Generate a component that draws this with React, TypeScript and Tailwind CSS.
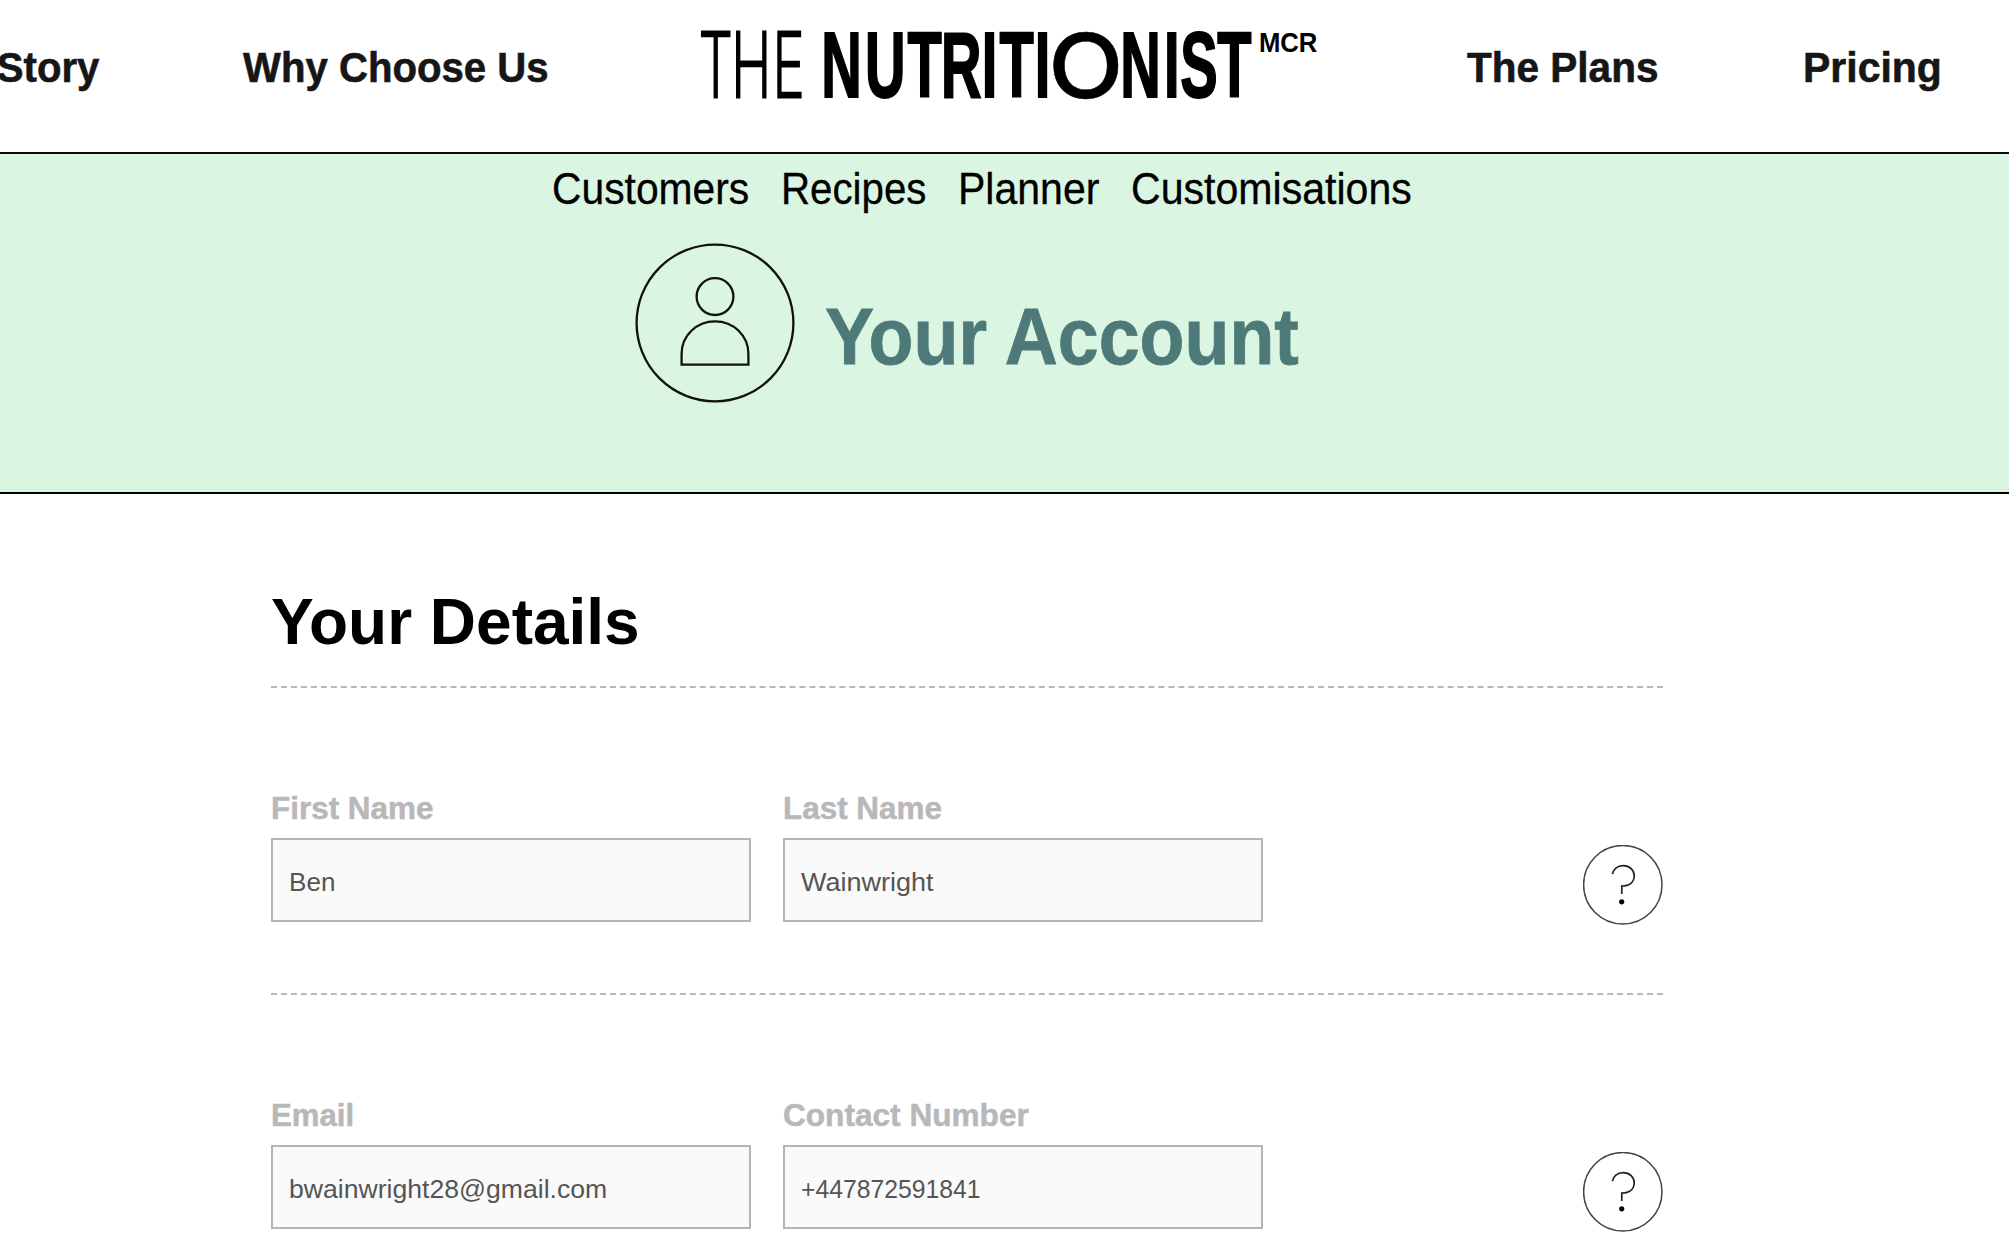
function Logo() {
  return (
    <svg
      className="block h-[152px] w-[620px] shrink-0"
      viewBox="700 0 620 152"
      fill="#000"
      stroke="#000"
      strokeLinejoin="miter"
      role="img"
      aria-label="The Nutritionist MCR"
    >
      <g transform="scale(0.61 1)">
        <text x="1145.4 1198.6 1266.6" y="97" className="font-['Inter'] text-[89px] font-extralight" strokeWidth="3">
          THE
        </text>
      </g>
      <g transform="scale(0.6 1)" className="font-['Liberation_Sans'] text-[93.5px] font-bold" strokeWidth="2">
        <text x="1368.6 1441.6 1512.4 1568.5 1636.4 1665.9 1724.6" y="97">
          NUTRITI
        </text>
        <text x="1867.2 1939.8 1967 2028.8" y="97">
          NIST
        </text>
      </g>
      <g transform="scale(1.09 1)">
        <text x="996.2" y="97.7" textAnchor="middle" strokeWidth="0.5" className="font-['Inter'] text-[90px] font-medium">
          O
        </text>
      </g>
      <g transform="scale(0.906 1)">
        <text x="1389.5" y="52" stroke="none" className="font-['Liberation_Sans'] text-[28.4px] font-bold">
          MCR
        </text>
      </g>
    </svg>
  );
}

function AccountIcon() {
  return (
    <svg className="block size-[160px] shrink-0" viewBox="0 0 160 160" fill="none" stroke="#111" strokeWidth="2.3">
      <circle cx="80" cy="80" r="78.4" />
      <circle cx="80" cy="53.6" r="18.4" />
      <path d="M46.6 121.6V111C46.6 92.5 61.5 78.4 80 78.4S113.4 92.5 113.4 111V121.6Z" />
    </svg>
  );
}

function HelpIcon() {
  return (
    <svg className="block size-20" viewBox="0 0 80 80" fill="none" stroke="#444" strokeWidth="1.5">
      <circle cx="39.8" cy="39.7" r="39.2" />
      <path d="M29.4 29.2C30 24.2 34.4 20.7 40.1 20.7C46.7 20.7 51.2 24.9 51.2 30.7C51.2 37.2 46.5 40.9 38.8 41V49" stroke="#222" strokeWidth="1.7" />
      <circle cx="38.7" cy="56.8" r="2.6" fill="#000" stroke="none" />
    </svg>
  );
}

function Field({ label, labelScale, value, valueScale }: { label: string; labelScale: string; value: string; valueScale: string }) {
  return (
    <div className="w-[480px]">
      <label className={`block origin-left text-[31.6px] leading-9 font-bold whitespace-nowrap text-[#b8b8b8] [-webkit-text-stroke:0.5px_#b8b8b8] ${labelScale}`}>{label}</label>
      <div className="mt-3 flex h-[84px] items-center border-2 border-[#b5b5b5] bg-[#fafafa] pt-[3px] pl-4 text-[26.6px] leading-8 text-[#555]">
        <span className={`inline-block origin-left whitespace-nowrap ${valueScale}`}>{value}</span>
      </div>
    </div>
  );
}

export default function App() {
  return (
    <div className="h-[1235px] w-[2009px] overflow-hidden bg-white font-['Liberation_Sans',sans-serif] text-black">
      <header className="flex h-[154px] border-b-2 border-[#0b0b12] text-[42px] leading-[48px] font-bold whitespace-nowrap text-[#161616]">
        <div className="mr-[144px] flex w-[99px] justify-end pt-[44px] [-webkit-text-stroke:0.6px_#161616]">
          <span className="origin-right scale-x-[0.955]">Story</span>
        </div>
        <div className="w-[457px] pt-[44px] [-webkit-text-stroke:0.6px_#161616]">
          <span className="inline-block origin-left scale-x-[0.956]">Why Choose Us</span>
        </div>
        <Logo />
        <div className="ml-[147px] w-[336px] pt-[44px] [-webkit-text-stroke:0.6px_#161616]">
          <span className="inline-block origin-left scale-x-[0.965]">The Plans</span>
        </div>
        <div className="pt-[44px] [-webkit-text-stroke:0.6px_#161616]">
          <span className="inline-block origin-left scale-x-[0.975]">Pricing</span>
        </div>
      </header>

      <section className="h-[340px] border-b-2 border-black bg-[#dbf5e3]">
        <nav className="flex gap-8 pt-[10px] pl-[552px] text-[44.5px] leading-[50px] whitespace-nowrap [-webkit-text-stroke:0.3px_#000]">
          <div className="w-[197px]"><span className="inline-block origin-left scale-x-[0.917]">Customers</span></div>
          <div className="w-[145px]"><span className="inline-block origin-left scale-x-[0.905]">Recipes</span></div>
          <div className="w-[141px]"><span className="inline-block origin-left scale-x-[0.922]">Planner</span></div>
          <div><span className="inline-block origin-left scale-x-[0.923]">Customisations</span></div>
        </nav>
        <div className="mt-[29px] ml-[635px] flex">
          <AccountIcon />
          <h1 className="ml-[30px] origin-left scale-x-[0.919] pt-[49px] text-[80px] leading-[90px] font-bold whitespace-nowrap text-[#4d7a79] [-webkit-text-stroke:0.8px_#4d7a79]">Your Account</h1>
        </div>
      </section>

      <main className="ml-[271px] w-[1392px]">
        <h2 className="h-[194px] border-b-2 border-dashed border-[#b8b8b8] pt-[92px] text-[64px] leading-[72px] font-bold">Your Details</h2>
        <div className="flex h-[307px] gap-8 border-b-2 border-dashed border-[#b8b8b8] pt-[102px]">
          <Field label="First Name" labelScale="scale-x-[0.995]" value="Ben" valueScale="scale-x-[0.98]" />
          <Field label="Last Name" labelScale="scale-x-[0.995]" value="Wainwright" valueScale="scale-x-[1.015]" />
          <div className="ml-auto pt-[55px]"><HelpIcon /></div>
        </div>
        <div className="flex h-[307px] gap-8 pt-[102px]">
          <Field label="Email" labelScale="scale-x-[0.985]" value="bwainwright28@gmail.com" valueScale="scale-x-[1]" />
          <Field label="Contact Number" labelScale="scale-x-100" value="+447872591841" valueScale="scale-x-[0.93]" />
          <div className="ml-auto pt-[55px]"><HelpIcon /></div>
        </div>
      </main>
    </div>
  );
}
